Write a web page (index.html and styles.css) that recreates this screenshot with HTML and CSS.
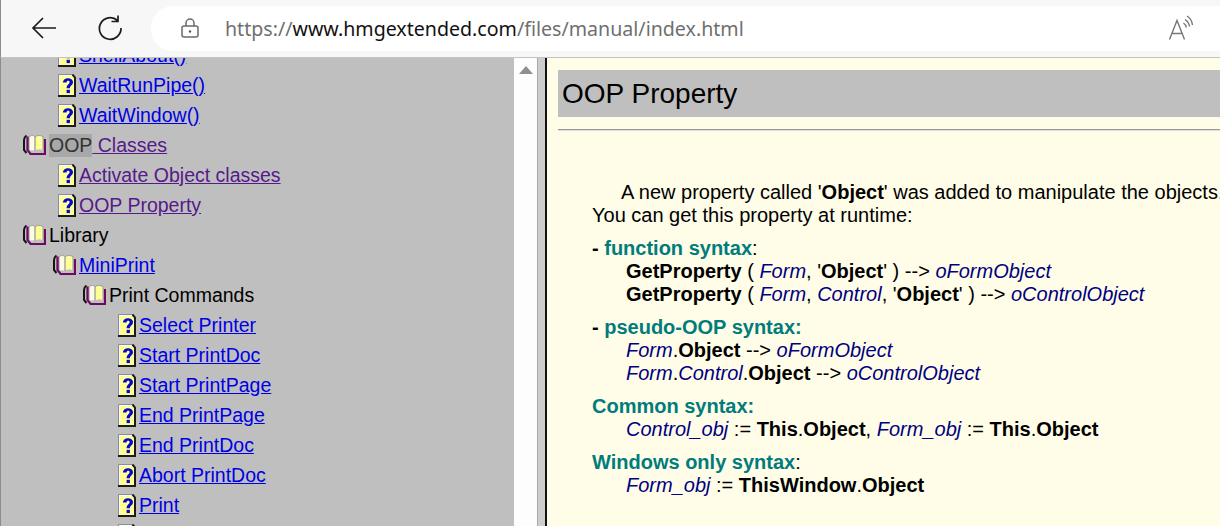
FILE: index.html
```html
<!DOCTYPE html>
<html lang="en">
<head>
<meta charset="utf-8">
<title>OOP Property</title>
<link rel="stylesheet" href="styles.css">
</head>
<body>
<svg class="sprites" width="0" height="0" aria-hidden="true">
  <defs>
    <pattern id="dots" width="3" height="3" patternUnits="userSpaceOnUse">
      <rect width="1" height="1" fill="#ffffff"/>
    </pattern>
  </defs>
  <symbol id="page" viewBox="0 0 18 23">
    <path d="M1 1h13l3 3v18H1z" fill="#ffff8c"/>
    <path d="M1 1h13l3 3v18H1z" fill="url(#dots)"/>
    <path d="M1.500 21V1.500H14" fill="none" stroke="#fafafa"/>
    <path d="M.5 22.500V.5H15" fill="none" stroke="#8c8c8c"/>
    <path d="M0 22h18M17 23V3.500L14.500.5" fill="none" stroke="#1c1c1c" stroke-width="2"/>
    <path d="M5 8.400C5 2.800 15 2.800 15 8c0 3.400-3.100 3.400-3.100 6.200H8.600c0-3.700 3-3.800 3-6.200 0-1.800-3.100-1.800-3.100.5z" fill="#0808c8"/>
    <rect x="8.600" y="15.800" width="3.300" height="3.300" fill="#0808c8"/>
  </symbol>
  <symbol id="book" viewBox="0 0 23 22">
    <path d="M6 3c2-2 5-2 6 0v14c-2-1-4-1-6 0z" fill="#fbfbe8"/>
    <path d="M12 3c2-2 5-2 8-.5V16c-3-1-6-1-8 1z" fill="#ffff8c"/>
    <path d="M12 3c2-2 5-2 8-.5V16c-3-1-6-1-8 1z" fill="url(#dots)"/>
    <path d="M6 17V3c2-2 5-2 6 0 2-2 5-2 8-.5V16" fill="none" stroke="#9a9a9a" stroke-width="1"/>
    <path d="M12 3v14" stroke="#7a7a7a" stroke-width="1"/>
    <path d="M3.500 1.500C1.500 3 1 4 1 6v10l2.500 3" fill="none" stroke="#141414" stroke-width="2"/>
    <path d="M4.500 2.500v13.500l3 4h14.500V5" fill="none" stroke="#6e0a66" stroke-width="2.200"/>
  </symbol>
</svg>

<header class="toolbar">
  <svg class="tool-icon" width="26" height="24" viewBox="0 0 26 24"><path d="M25 12H2M12 2 2 12l10 10" fill="none" stroke="#1c1c1c" stroke-width="1.700"/></svg>
  <svg class="tool-icon reload" width="28" height="28" viewBox="0 0 28 28"><path d="M21.500 6.500A10.800 10.800 0 1 0 25 14M22 1.500v6h-6.500" fill="none" stroke="#1c1c1c" stroke-width="1.700"/></svg>
  <div class="address">
    <svg class="lock" width="20" height="22" viewBox="0 0 20 22"><path d="M6 9V6a4 4 0 0 1 8 0v3" fill="none" stroke="#6b6b6b" stroke-width="1.500"/><rect x="2" y="9" width="16" height="11" rx="2" fill="none" stroke="#6b6b6b" stroke-width="1.500"/><circle cx="10" cy="14.500" r="1.200" fill="#555"/></svg>
    <div class="url"><span class="dim">https://</span>www.hmgextended.com<span class="dim">/files/manual/index.html</span></div>
    <svg class="read" width="26" height="26" viewBox="0 0 26 26"><path d="M1.500 24.500 9 5.500l7.500 19M4 18.500h10" fill="none" stroke="#777" stroke-width="1.400"/><path d="M15.500 8c1.500 1 2.500 2.500 2.800 4.500M17 4.500c2.500 1.500 4 4 4.500 7M19 1c3 1.800 5 5 5.500 9" fill="none" stroke="#777" stroke-width="1.400"/></svg>
  </div>
</header>

<main class="frames">
  <nav class="tree">
    <div class="tree-list">
      <div class="row l2"><svg class="ico-page"><use href="#page"/></svg><a href="#">ShellAbout()</a></div>
      <div class="row l2"><svg class="ico-page"><use href="#page"/></svg><a href="#">WaitRunPipe()</a></div>
      <div class="row l2"><svg class="ico-page"><use href="#page"/></svg><a href="#">WaitWindow()</a></div>
      <div class="row l1"><svg class="ico-book"><use href="#book"/></svg><a href="#" class="visited"><span class="hover">OOP</span> Classes</a></div>
      <div class="row l2"><svg class="ico-page"><use href="#page"/></svg><a href="#" class="visited">Activate Object classes</a></div>
      <div class="row l2"><svg class="ico-page"><use href="#page"/></svg><a href="#" class="visited">OOP Property</a></div>
      <div class="row l1"><svg class="ico-book"><use href="#book"/></svg><span>Library</span></div>
      <div class="row l2b"><svg class="ico-book"><use href="#book"/></svg><a href="#">MiniPrint</a></div>
      <div class="row l3"><svg class="ico-book"><use href="#book"/></svg><span>Print Commands</span></div>
      <div class="row l4"><svg class="ico-page"><use href="#page"/></svg><a href="#">Select Printer</a></div>
      <div class="row l4"><svg class="ico-page"><use href="#page"/></svg><a href="#">Start PrintDoc</a></div>
      <div class="row l4"><svg class="ico-page"><use href="#page"/></svg><a href="#">Start PrintPage</a></div>
      <div class="row l4"><svg class="ico-page"><use href="#page"/></svg><a href="#">End PrintPage</a></div>
      <div class="row l4"><svg class="ico-page"><use href="#page"/></svg><a href="#">End PrintDoc</a></div>
      <div class="row l4"><svg class="ico-page"><use href="#page"/></svg><a href="#">Abort PrintDoc</a></div>
      <div class="row l4"><svg class="ico-page"><use href="#page"/></svg><a href="#">Print</a></div>
      <div class="row l4"><svg class="ico-page"><use href="#page"/></svg></div>
    </div>
  </nav>
  <div class="scrollbar"><span class="arrow"></span></div>
  <div class="divider"></div>
  <article class="content">
    <h1 class="title">OOP Property</h1>
    <hr class="rule">
    <p class="intro"><span class="first">A new property called '<b>Object</b>' was added to manipulate the objects.</span><br>You can get this property at runtime:</p>
    <p class="block"><b>- </b><b class="teal">function syntax</b>:<br>
      <span class="code"><b>GetProperty</b> ( <i>Form</i>, '<b>Object</b>' ) --&gt; <i>oFormObject</i></span><br>
      <span class="code"><b>GetProperty</b> ( <i>Form</i>, <i>Control</i>, '<b>Object</b>' ) --&gt; <i>oControlObject</i></span></p>
    <p class="block"><b>- </b><b class="teal">pseudo-OOP syntax:</b><br>
      <span class="code"><i>Form</i>.<b>Object</b> --&gt; <i>oFormObject</i></span><br>
      <span class="code"><i>Form</i>.<i>Control</i>.<b>Object</b> --&gt; <i>oControlObject</i></span></p>
    <p class="block"><b class="teal">Common syntax:</b><br>
      <span class="code"><i>Control_obj</i> := <b>This</b>.<b>Object</b>, <i>Form_obj</i> := <b>This</b>.<b>Object</b></span></p>
    <p class="block"><b class="teal">Windows only syntax</b>:<br>
      <span class="code"><i>Form_obj</i> := <b>ThisWindow</b>.<b>Object</b></span></p>
  </article>
</main>
</body>
</html>
```
FILE: styles.css
```css
* { box-sizing: border-box; }
html, body { margin: 0; height: 100%; overflow: hidden; }
body {
  width: 1220px;
  height: 526px;
  display: flex;
  flex-direction: column;
  font-family: "Liberation Sans", Arial, sans-serif;
  background: #fffde8;
}
.sprites { position: absolute; }
.toolbar {
  flex: 0 0 58px;
  display: flex;
  align-items: center;
  background: #f7f7f7;
  padding: 0 0 1px 30px;
  border-left: 1px solid #8c8c8c;
  border-bottom: 1px solid #c4c4c4;
}
.tool-icon { flex: none; }
.reload { margin-left: 39px; }
.address {
  flex: 1;
  height: 45px;
  margin-left: 27px;
  background: #fff;
  border-radius: 22px 0 0 22px;
  display: flex;
  align-items: center;
  padding-left: 29px;
}
.lock { flex: none; }
.url {
  margin-left: 25px;
  font-family: "Noto Sans", sans-serif;
  font-size: 19.6px;
  color: #111;
  white-space: nowrap;
  flex: 1;
}
.dim { color: #6f6f6f; }
.read { flex: none; margin-right: 26px; }

.frames { flex: 1; min-height: 0; display: flex; }
.tree {
  width: 514px;
  flex: none;
  background: #bfbfbf;
  overflow: hidden;
  font-size: 19.5px;
  color: #000;
  border-left: 1px solid #8c8c8c;
}
.tree-list { margin-top: -18px; }
.row { height: 30px; display: flex; align-items: center; white-space: nowrap; }
.row a { color: #0000e6; }
.row a.visited { color: #551a8b; }
.hover { background: #a8a8a8; color: #333; display: inline-block; }
.l1 { padding-left: 22px; }
.l2 { padding-left: 57px; }
.l2b { padding-left: 52px; }
.l3 { padding-left: 82px; }
.l4 { padding-left: 117px; }
.ico-page { width: 18px; height: 23px; margin-right: 3px; flex: none; }
.ico-book { width: 23px; height: 22px; margin-right: 3px; flex: none; }
.scrollbar {
  width: 23px;
  background: #fdfdfd;
  display: flex;
  justify-content: center;
  padding-top: 8px;
  flex: none;
}
.arrow {
  width: 0; height: 0;
  border-left: 7px solid transparent;
  border-right: 7px solid transparent;
  border-bottom: 8px solid #8f8f8f;
}
.divider {
  width: 8px;
  flex: none;
  background: #cdcdcd;
  border-left: 1px solid #a8a8a8;
}
.content {
  flex: 1;
  min-width: 0;
  overflow: hidden;
  background: #fffde8;
  border-left: 2px solid #111;
  padding: 12px 0 0 11px;
  font-size: 20px;
  line-height: 23px;
  color: #000;
  white-space: nowrap;
}
.title {
  margin: 0;
  height: 47px;
  background: #bfbfbf;
  font-size: 28px;
  font-weight: 400;
  line-height: 47px;
  padding-left: 4px;
}
.rule { margin: 12px 0 0; border: 0; border-top: 1px solid #999; border-bottom: 1px solid #ddd; height: 2px; }
.intro { margin: 50px 0 0 34px; }
.first { margin-left: 29px; }
.block { margin: 10px 0 0 34px; }
.teal { color: #007c7c; }
.code { margin-left: 34px; }
i { color: #000080; }
```
